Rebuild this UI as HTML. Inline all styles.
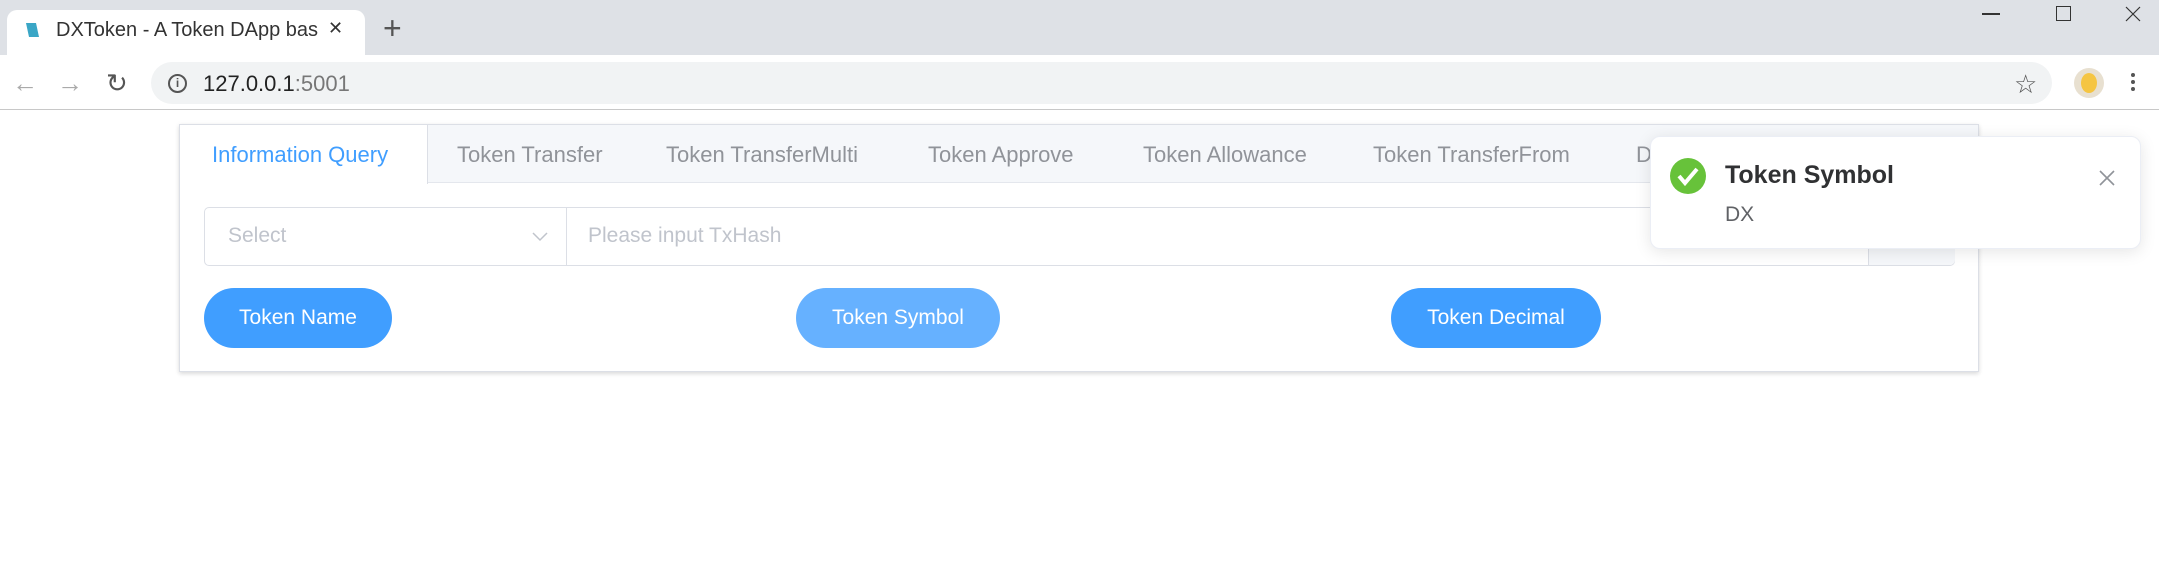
<!DOCTYPE html>
<html><head><meta charset="utf-8"><style>
*{box-sizing:border-box;margin:0;padding:0}
body{width:2159px;height:582px;overflow:hidden;background:#fff;font-family:"Liberation Sans",sans-serif;position:relative}
.abs{position:absolute}
.strip{left:0;top:0;width:2159px;height:55px;background:#dee1e6}
.tab{left:7px;top:10px;width:358px;height:45px;background:#fff;border-radius:10px 10px 0 0}
.toolbar{left:0;top:55px;width:2159px;height:55px;background:#fff;border-bottom:1px solid #c8c8c8}
.omni{left:151px;top:62px;width:1901px;height:42px;background:#f1f3f4;border-radius:21px}
.card{left:179px;top:124px;width:1800px;height:248px;border:1px solid #dcdfe6;box-shadow:0 2px 4px rgba(0,0,0,.12),0 0 6px rgba(0,0,0,.04);background:#fff}
.hdr{left:0;top:0;width:1798px;height:58px;background:#f5f7fa;border-bottom:1px solid #e4e7ed}
.tl{top:17px;font-size:22px;color:#909399;white-space:nowrap}
.btn{top:163px;height:60px;border-radius:30px;background:#409eff;color:#fff;font-size:21px;text-align:center;line-height:60px}
</style></head><body>
<div class="abs strip"></div>
<div class="abs tab"></div>
<svg class="abs" style="left:22px;top:20px" width="20" height="20" viewBox="0 0 20 20"><path d="M4 3 L14 3 L17 17 L7 17 Z" fill="#3aa6c6"/></svg>
<div class="abs" style="left:56px;top:19px;font-size:20px;color:#333;white-space:nowrap;width:262px;overflow:hidden">DXToken - A Token DApp base</div>
<div class="abs" style="left:328px;top:18px;font-size:18px;color:#333">✕</div>
<div class="abs" style="left:383px;top:10px;font-size:32px;color:#555">+</div>
<div class="abs" style="left:1982px;top:13px;width:18px;height:1.5px;background:#333"></div>
<div class="abs" style="left:2056px;top:6px;width:15px;height:15px;border:1px solid #333"></div>
<svg class="abs" style="left:2125px;top:6px" width="16" height="16" viewBox="0 0 16 16"><path d="M1 1 L15 15 M15 1 L1 15" stroke="#333" stroke-width="1.2"/></svg>
<div class="abs toolbar"></div>
<div class="abs" style="left:12px;top:68px;font-size:26px;color:#aaa">←</div>
<div class="abs" style="left:57px;top:68px;font-size:26px;color:#aaa">→</div>
<div class="abs" style="left:106px;top:68px;font-size:26px;color:#555">↻</div>
<div class="abs omni"></div>
<div class="abs" style="left:168px;top:74px;width:19px;height:19px;border:2px solid #555;border-radius:50%;font-size:12px;text-align:center;line-height:15px;color:#555;font-weight:bold">i</div>
<div class="abs" style="left:203px;top:71px;font-size:22px;color:#222">127.0.0.1<span style="color:#777">:5001</span></div>
<div class="abs" style="left:2014px;top:69px;font-size:26px;color:#555">☆</div>
<div class="abs" style="left:2074px;top:68px;width:30px;height:30px;border-radius:50%;background:#e8e0d0"><div style="margin:5px 7px;width:16px;height:20px;border-radius:50%;background:#f5c542"></div></div>
<div class="abs" style="left:2131px;top:73px;width:4px;height:4px;border-radius:2px;background:#555;box-shadow:0 7px 0 #555,0 14px 0 #555"></div>
<div class="abs card">
 <div class="abs hdr"></div>
 <div class="abs" style="left:0;top:0;width:248px;height:59px;background:#fff;border-right:1px solid #dcdfe6"></div>
 <div class="abs tl" style="left:32px;color:#409eff">Information Query</div>
 <div class="abs tl" style="left:277px">Token Transfer</div>
 <div class="abs tl" style="left:486px">Token TransferMulti</div>
 <div class="abs tl" style="left:748px">Token Approve</div>
 <div class="abs tl" style="left:963px">Token Allowance</div>
 <div class="abs tl" style="left:1193px">Token TransferFrom</div>
 <div class="abs tl" style="left:1456px">D</div>
 <div class="abs" style="left:24px;top:82px;width:1751px;height:59px;border:1px solid #dcdfe6;border-radius:5px"></div>
 <div class="abs" style="left:386px;top:83px;width:1px;height:57px;background:#dcdfe6"></div>
 <div class="abs" style="left:1688px;top:83px;width:87px;height:57px;background:#f5f7fa;border-left:1px solid #dcdfe6;border-radius:0 5px 5px 0"></div>
 <div class="abs" style="left:48px;top:99px;font-size:21px;color:#c0c4cc">Select</div>
 <svg class="abs" style="left:352px;top:105px" width="16" height="12" viewBox="0 0 16 12"><path d="M1 3 L8 10 L15 3" fill="none" stroke="#c0c4cc" stroke-width="1.5"/></svg>
 <div class="abs" style="left:408px;top:99px;font-size:21px;color:#c0c4cc">Please input TxHash</div>
 <div class="abs btn" style="left:24px;width:188px">Token Name</div>
 <div class="abs btn" style="left:616px;width:204px;background:#66b1ff">Token Symbol</div>
 <div class="abs btn" style="left:1211px;width:210px">Token Decimal</div>
</div>
<div class="abs" style="left:1650px;top:136px;width:491px;height:113px;background:#fff;border:1px solid #ebeef5;border-radius:10px;box-shadow:0 3px 16px rgba(0,0,0,.1)">
 <div class="abs" style="left:19px;top:21px;width:36px;height:36px;border-radius:50%;background:#67c23a"><svg width="36" height="36" viewBox="0 0 36 36"><path d="M9 18 L15 25 L27 11" fill="none" stroke="#fff" stroke-width="4"/></svg></div>
 <div class="abs" style="left:74px;top:24px;font-size:25px;font-weight:bold;color:#303133">Token Symbol</div>
 <div class="abs" style="left:74px;top:66px;font-size:21px;color:#606266">DX</div>
 <svg class="abs" style="left:448px;top:33px" width="16" height="16" viewBox="0 0 16 16"><path d="M1 1 L15 15 M15 1 L1 15" stroke="#909399" stroke-width="1.6"/></svg>
</div>
</body></html>
